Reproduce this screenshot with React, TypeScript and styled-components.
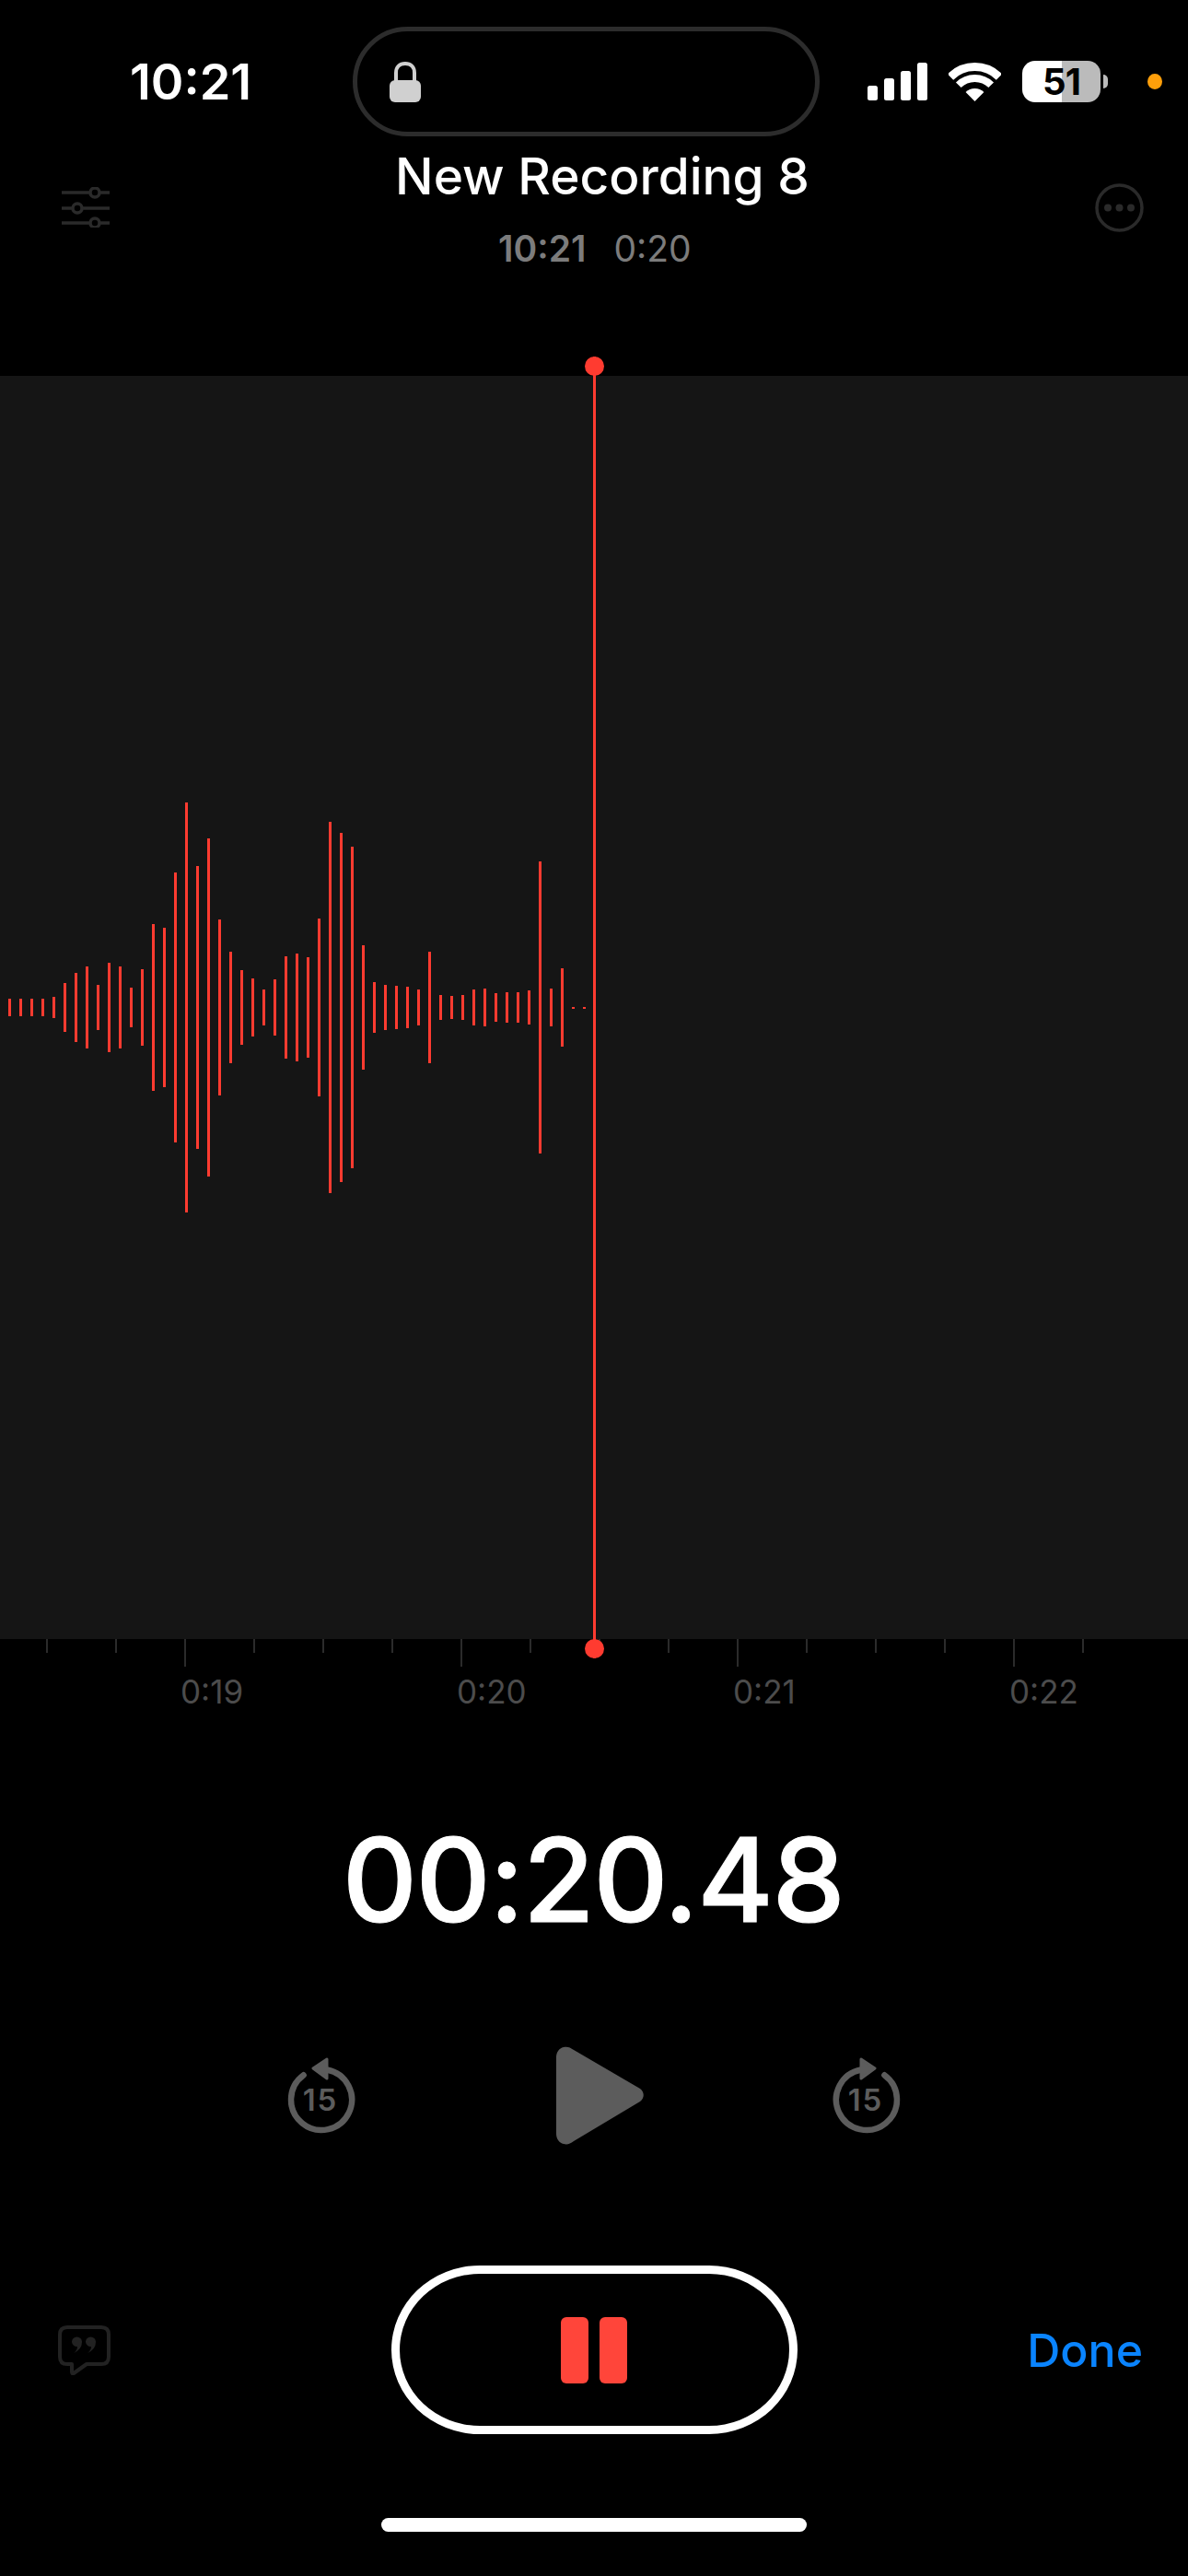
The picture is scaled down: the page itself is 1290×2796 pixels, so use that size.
import styled, { createGlobalStyle } from 'styled-components';

const GlobalStyle = createGlobalStyle`
    html, body {
        margin: 0;
        padding: 0;
        background: #000;
    }
    * {
        box-sizing: border-box;
    }
`

const Screen = styled.div`
    width: 1290px;
    height: 2796px;
    background: #000;
    color: #fff;
    font-family: Inter, "Liberation Sans", sans-serif;
    display: flex;
    flex-direction: column;
    overflow: hidden;
`

const StatusBar = styled.div`
    height: 119px;
    margin-top: 29px;
    display: flex;
    align-items: center;
`
const Clock = styled.div`
    width: 383px;
    padding-left: 141px;
    font-size: 54px;
    font-weight: 600;
    line-height: 1;
`
const Island = styled.div`
    width: 507px;
    height: 119px;
    border: 5px solid #2c2c2c;
    border-radius: 60px;
    display: flex;
    align-items: center;
    padding-left: 35px;
`
const StatusIcons = styled.div`
    display: flex;
    align-items: center;
    gap: 23px;
    margin-left: 52px;
`
const Battery = styled.div`
    width: 85px;
    height: 45px;
    border-radius: 14px;
    background: linear-gradient(to right, #fff 0, #fff 43px, #bbb 43px, #bbb 100%);
    color: #000;
    font-size: 40px;
    font-weight: 700;
    line-height: 45px;
    letter-spacing: -1px;
    text-align: center;
    position: relative;
    &::after {
        content: '';
        position: absolute;
        left: 88px;
        top: 15px;
        width: 5px;
        height: 15px;
        border-radius: 0 5px 5px 0;
        background: #bbb;
    }
`
const OrangeDot = styled.div`
    width: 16px;
    height: 17px;
    margin-left: 28px;
    border-radius: 50%;
    background: #ff9f0a;
`

const Header = styled.div`
    height: 260px;
    padding: 10px 48px 0 67px;
    display: flex;
    justify-content: space-between;
    align-items: flex-start;
`
const TitleBlock = styled.div`
    display: flex;
    flex-direction: column;
    align-items: flex-start;
`
const Title = styled.div`
    font-size: 55px;
    font-weight: 500;
    line-height: 66px;
`
const Subtitle = styled.div`
    margin: 23px 0 0 112px;
    font-size: 39px;
    line-height: 46px;
    color: #7c7c7c;
    display: flex;
    gap: 30px;
`
const SubtitleStrong = styled.span`
    font-weight: 600;
`
const HeaderIcon = styled.svg<{ $top: number }>`
    margin-top: ${({ $top }) => $top}px;
    flex: none;
`

const WavePanel = styled.div`
    height: 1371px;
    background: #151515;
    position: relative;
    display: flex;
    align-items: center;
    gap: 9px;
    padding-left: 9px;
`
const WaveBar = styled.div<{ $h: number }>`
    width: 3px;
    height: ${({ $h }) => $h}px;
    background: #ff3b30;
    flex: none;
`
const Playhead = styled.div`
    position: absolute;
    left: 644px;
    top: -21px;
    bottom: -21px;
    width: 3px;
    background: #ff3b30;
    &::before,
    &::after {
        content: '';
        position: absolute;
        left: -9px;
        width: 21px;
        height: 21px;
        border-radius: 50%;
        background: #ff3b30;
    }
    &::before {
        top: 0;
    }
    &::after {
        bottom: 0;
    }
`

const Ruler = styled.div`
    height: 30px;
    display: flex;
    align-items: flex-start;
    padding-left: 50px;
`
const Tick = styled.div<{ $major: boolean }>`
    width: 75px;
    flex: none;
    &::before {
        content: '';
        display: block;
        width: 2px;
        height: ${({ $major }) => ($major ? 30 : 15)}px;
        background: #2b2b2b;
    }
`
const TimeLabels = styled.div`
    display: flex;
    padding-left: 196px;
    margin-top: 6px;
`
const TimeLabel = styled.div`
    width: 300px;
    flex: none;
    font-size: 35px;
    line-height: 42px;
    color: #4c4c4c;
`

const Timer = styled.div`
    margin-top: 110px;
    padding-right: 2px;
    text-align: center;
    font-size: 126px;
    font-weight: 500;
    line-height: 146px;
    letter-spacing: -1.5px;
    -webkit-text-stroke: 1px #fff;
`

const Transport = styled.div`
    margin-top: 105px;
    height: 112px;
    display: flex;
    justify-content: center;
    align-items: center;
    gap: 204px;
`
const PlayIcon = styled.svg`
    margin-left: 13px;
`
const SkipLabel = styled.text`
    font-family: Inter, sans-serif;
    font-size: 33px;
    font-weight: 600;
    letter-spacing: 2px;
    fill: #5c5c5c;
`

const Controls = styled.div`
    margin-top: 129px;
    height: 183px;
    display: grid;
    grid-template-columns: 1fr 441px 1fr;
    align-items: center;
`
const QuoteIcon = styled.svg`
    margin-left: 63px;
`
const RecordButton = styled.div`
    height: 183px;
    border: 9px solid #fff;
    border-radius: 96px / 91.5px;
    display: flex;
    justify-content: center;
    align-items: center;
    gap: 12px;
`
const PauseBar = styled.div`
    width: 30px;
    height: 72px;
    border-radius: 6px;
    background: #ff453a;
`
const Done = styled.div`
    justify-self: end;
    margin-right: 49px;
    font-size: 50px;
    font-weight: 500;
    line-height: 60px;
    color: #0a84ff;
`
const HomeBar = styled.div`
    width: 462px;
    height: 15px;
    margin: 91px auto 0;
    border-radius: 8px;
    background: #fff;
`

const waveHeights = [
    19, 19, 19, 19, 23, 53, 75, 89, 49, 97, 89, 43, 83, 181, 173, 293, 445, 307, 367, 191, 121, 81, 63, 39, 61, 111, 117, 109,
    193, 403, 379, 349, 135, 55, 49, 47, 45, 39, 121, 27, 25, 27, 39, 41, 31, 33, 33, 37, 317, 41, 85, 2, 2,
]
const ticks = Array.from({ length: 16 }, (_, i) => i)
const timeLabels = ['0:19', '0:20', '0:21', '0:22']

const Skip = ({ forward }: { forward?: boolean }) => (
    <svg width="76" height="83" viewBox="0 0 76 83">
        <g transform={forward ? 'translate(76 0) scale(-1 1)' : undefined}>
            <path d="M 44 13.500 A 33 33 0 1 1 18.600 19.300" fill="none" stroke="#5c5c5c" strokeWidth="6.500" strokeLinecap="round" />
            <path d="M 29 12 L 44 2 V 23 Z" fill="#5c5c5c" stroke="#5c5c5c" strokeWidth="3" strokeLinejoin="round" />
        </g>
        <SkipLabel x="37" y="58" textAnchor="middle">15</SkipLabel>
    </svg>
)

export default function App() {
    return (
        <Screen>
            <GlobalStyle />
            <StatusBar>
                <Clock>10:21</Clock>
                <Island>
                    <svg width="34" height="44" viewBox="0 0 34 44">
                        <path d="M 7 22 V 12 C 7 6 11 2 17 2 C 23 2 27 6 27 12 V 22" fill="none" stroke="#d0d0d0" strokeWidth="4" />
                        <rect x="0" y="20" width="34" height="24" rx="6" fill="#d0d0d0" />
                    </svg>
                </Island>
                <StatusIcons>
                    <svg width="65" height="41" viewBox="0 0 65 41" fill="#fff">
                        <rect x="0" y="25" width="11" height="16" rx="2.500" />
                        <rect x="18" y="17" width="11" height="24" rx="2.500" />
                        <rect x="36" y="9" width="11" height="32" rx="2.500" />
                        <rect x="54" y="0" width="11" height="41" rx="2.500" />
                    </svg>
                    <svg width="57" height="42" viewBox="0 0 57 42" fill="none" stroke="#fff">
                        <path d="M 2 15.500 A 37.500 37.500 0 0 1 55 15.500" strokeWidth="9" />
                        <path d="M 10.800 24.300 A 25 25 0 0 1 46.200 24.300" strokeWidth="8" />
                        <path d="M 28.500 42 L 18.600 32.100 A 14 14 0 0 1 38.400 32.100 Z" fill="#fff" stroke="none" />
                    </svg>
                    <Battery>51</Battery>
                    <OrangeDot />
                </StatusIcons>
            </StatusBar>
            <Header>
                <HeaderIcon $top={45} width="52" height="44" viewBox="0 0 52 44" fill="none" stroke="#2a2a2a" strokeWidth="3.500">
                    <path d="M 0 6 H 30 M 42 6 H 52 M 0 23 H 11 M 23 23 H 52 M 0 39 H 30 M 42 39 H 52" />
                    <circle cx="36" cy="6" r="5" />
                    <circle cx="17" cy="23" r="5" />
                    <circle cx="36" cy="39" r="5" />
                </HeaderIcon>
                <TitleBlock>
                    <Title>New Recording 8</Title>
                    <Subtitle>
                        <SubtitleStrong>10:21</SubtitleStrong>
                        <span>0:20</span>
                    </Subtitle>
                </TitleBlock>
                <HeaderIcon $top={41} width="53" height="53" viewBox="0 0 53 53">
                    <circle cx="26.500" cy="26.500" r="24.500" fill="none" stroke="#2a2a2a" strokeWidth="3.500" />
                    <circle cx="14" cy="26.500" r="4" fill="#2a2a2a" />
                    <circle cx="26.500" cy="26.500" r="4" fill="#2a2a2a" />
                    <circle cx="39" cy="26.500" r="4" fill="#2a2a2a" />
                </HeaderIcon>
            </Header>
            <WavePanel>
                {waveHeights.map((h, i) => (
                    <WaveBar key={i} $h={h} />
                ))}
                <Playhead />
            </WavePanel>
            <Ruler>
                {ticks.map((i) => (
                    <Tick key={i} $major={i % 4 === 2} />
                ))}
            </Ruler>
            <TimeLabels>
                {timeLabels.map((label) => (
                    <TimeLabel key={label}>{label}</TimeLabel>
                ))}
            </TimeLabels>
            <Timer>00:20.48</Timer>
            <Transport>
                <Skip />
                <PlayIcon width="95" height="107" viewBox="0 0 95 107">
                    <path d="M 8 1 C 12 0 15 1 19 4 L 91 46 C 96 50 96 56 91 60 L 19 103 C 15 106 12 107 8 106 C 3 105 0 100 0 95 V 12 C 0 7 3 2 8 1 Z" fill="#5c5c5c" />
                </PlayIcon>
                <Skip forward />
            </Transport>
            <Controls>
                <QuoteIcon width="57" height="54" viewBox="0 0 57 54">
                    <path d="M 10 2 H 47 Q 55 2 55 10 V 34 Q 55 42 47 42 H 31 L 17 52 Q 15 53 15 50 V 42 H 10 Q 2 42 2 34 V 10 Q 2 2 10 2 Z" fill="none" stroke="#222" strokeWidth="4" strokeLinejoin="round" />
                    <path d="M 15 18 a 5.500 5.500 0 1 1 11 0 q 0 8 -9 12 q 4 -3 4 -7 a 5.500 5.500 0 0 1 -6 -5 Z M 30 18 a 5.500 5.500 0 1 1 11 0 q 0 8 -9 12 q 4 -3 4 -7 a 5.500 5.500 0 0 1 -6 -5 Z" fill="#222" />
                </QuoteIcon>
                <RecordButton>
                    <PauseBar />
                    <PauseBar />
                </RecordButton>
                <Done>Done</Done>
            </Controls>
            <HomeBar />
        </Screen>
    )
}
